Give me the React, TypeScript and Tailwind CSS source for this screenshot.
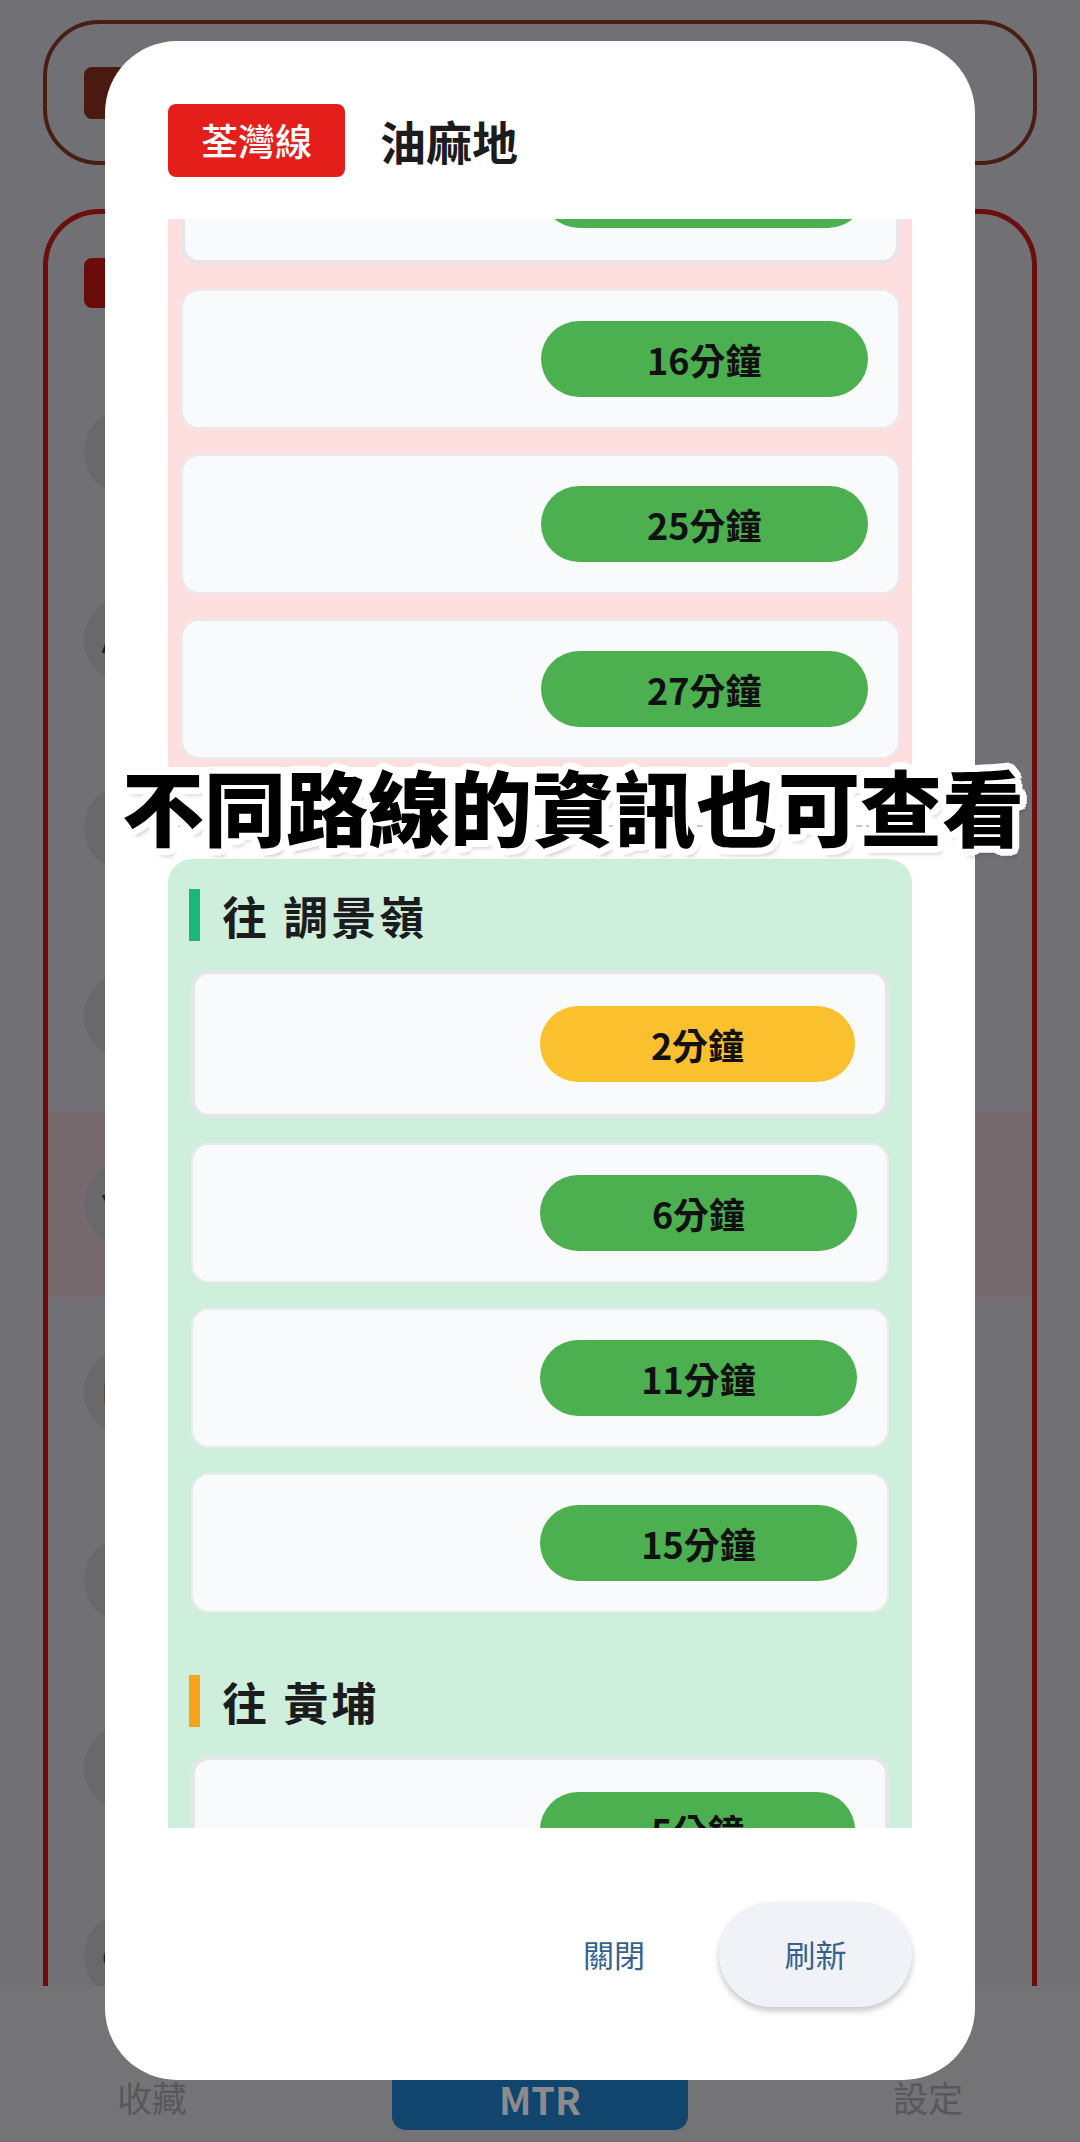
import clsx from 'clsx';

const font = "font-['Noto_Sans_CJK_TC','Noto_Sans',sans-serif]";

type Arrival = { time: string; soon?: boolean };

const northbound: Arrival[] = [{ time: '9分鐘' }, { time: '16分鐘' }, { time: '25分鐘' }, { time: '27分鐘' }];

const groups: { dest: string; bar: string; items: Arrival[] }[] = [
  {
    dest: '調景嶺',
    bar: 'bg-[#1cb67b]',
    items: [{ time: '2分鐘', soon: true }, { time: '6分鐘' }, { time: '11分鐘' }, { time: '15分鐘' }],
  },
  {
    dest: '黃埔',
    bar: 'bg-[#f5a41c]',
    items: [{ time: '5分鐘' }, { time: '9分鐘' }],
  },
];

// station rows of the dimmed list behind the dialog
const stations = ['', 'ADM', '', '', 'YMT', 'MOK', '', '', 'CEN'];

function TimeCard({ item, first }: { item: Arrival; first: boolean }) {
  return (
    <div
      className={clsx(
        'grid grid-cols-2 items-center px-[30px] rounded-[18px] bg-[#f9fafc]',
        first ? 'h-[148px] border-4 border-[#e5e5ea]' : 'h-[140px] border-2 border-[#eaeaee]'
      )}
    >
      <div />
      <div
        className={clsx(
          'h-[76px] rounded-full flex items-center justify-center text-[36px] font-bold text-[#111] leading-none',
          item.soon ? 'bg-[#fbc02d]' : 'bg-[#4caf50]'
        )}
      >
        {item.time}
      </div>
    </div>
  );
}

function DestHeader({ dest, bar }: { dest: string; bar: string }) {
  return (
    <div className="flex items-center gap-[22px] -ml-[2px]">
      <div className={clsx('w-[11px] h-[52px]', bar)} />
      <span className="text-[45px] font-bold tracking-[3px] text-[#1c1c1e] leading-none">往 {dest}</span>
    </div>
  );
}

function Background() {
  return (
    <div className="flex flex-col h-[2142px]">
      <div className="flex-1 overflow-hidden px-[43px] pt-[20px]">
        <div className="h-[145px] rounded-[56px] border-4 border-[#4b1d14] pt-[43px] pl-[37px]">
          <div className="w-[180px] h-[52px] rounded-[8px] bg-[#4a1a10]" />
        </div>
        <div className="mt-[44px] h-[2000px] rounded-t-[56px] border-[5px] border-b-0 border-[#6b0e0e] pt-[44px]">
          <div className="ml-[36px] w-[180px] h-[50px] rounded-[8px] bg-[#6a0c0c]" />
          <div className="mt-[50px] flex flex-col">
            {stations.map((code, i) => (
              <div key={i} className={clsx('h-[188px] flex items-center pl-[36px]', i === 4 && 'bg-[#766a6e]')}>
                <div className="w-[88px] h-[88px] rounded-full bg-[#69696b] flex items-center pl-[18px] text-[30px] font-bold text-[#1a1a1a]">
                  {code}
                </div>
              </div>
            ))}
          </div>
        </div>
      </div>
      <div className="h-[156px] bg-[#747476] flex items-end justify-between px-[117px] pb-[12px]">
        <span className="text-[35px] text-[#58585a] pb-[7px]">收藏</span>
        <div className="w-[296px] h-[110px] rounded-[14px] bg-[#12456e] flex items-end justify-center pb-[12px]">
          <span className="text-[38px] font-semibold text-[#8b8b8d] leading-none">MTR</span>
        </div>
        <span className="text-[35px] text-[#58585a] pb-[7px]">設定</span>
      </div>
    </div>
  );
}

export default function App() {
  return (
    <div className={clsx('relative w-[1080px] h-[2142px] overflow-hidden bg-[#717175]', font)}>
      <Background />

      {/* dialog */}
      <div className="absolute left-[105px] top-[41px] w-[870px] h-[2039px] bg-white rounded-[72px] flex flex-col px-[63px] pt-[63px] pb-[73px]">
        <div className="flex items-center gap-[35px] h-[73px]">
          <div className="h-[73px] px-[33px] rounded-[8px] bg-[#e31e1b] flex items-center text-white text-[37px] font-medium">
            荃灣線
          </div>
          <span className="text-[46px] font-semibold text-[#1c1c1e]">油麻地</span>
        </div>

        <div className="mt-[42px] h-[1609px] overflow-hidden">
          <div className="-mt-[123px]">
            <div className="bg-[#fddfe0] pl-[13px] pr-[12px] pt-[20px] pb-[8px] flex flex-col gap-[25px]">
              {northbound.map((item, i) => (
                <TimeCard key={i} item={item} first={i === 0} />
              ))}
            </div>
            <div className="mt-[58px] border-t-2 border-dashed border-[#c8c8cc]" />
            <div className="mt-[32px] bg-[#cdefdc] rounded-t-[24px] px-[23px] pt-[30px] pb-[40px] flex flex-col gap-[62px]">
              {groups.map((g) => (
                <div key={g.dest} className="flex flex-col">
                  <DestHeader dest={g.dest} bar={g.bar} />
                  <div className="mt-[29px] flex flex-col gap-[25px]">
                    {g.items.map((item, i) => (
                      <TimeCard key={i} item={item} first={i === 0} />
                    ))}
                  </div>
                </div>
              ))}
            </div>
          </div>
        </div>

        <div className="mt-[74px] flex justify-end items-center gap-[37px]">
          <button className="h-[105px] px-[37px] text-[31px] text-[#33628f]">關閉</button>
          <button className="w-[193px] h-[105px] rounded-full bg-[#f1f2f8] text-[31px] text-[#33628f] shadow-[0_4px_6px_rgba(0,0,0,0.22)]">
            刷新
          </button>
        </div>
      </div>

      {/* caption */}
      <div className="absolute left-[122px] top-[764px] whitespace-nowrap text-[82px] leading-none font-black text-black [text-shadow:7px_0_0_#fff,-7px_0_0_#fff,0_7px_0_#fff,0_-7px_0_#fff,5px_5px_0_#fff,-5px_5px_0_#fff,5px_-5px_0_#fff,-5px_-5px_0_#fff,3px_6px_0_#fff,-3px_6px_0_#fff,6px_3px_0_#fff,-6px_3px_0_#fff,3px_-6px_0_#fff,-3px_-6px_0_#fff,6px_-3px_0_#fff,-6px_-3px_0_#fff,4px_8px_4px_rgba(0,0,0,0.2)]">
        不同路線的資訊也可查看
      </div>
    </div>
  );
}
